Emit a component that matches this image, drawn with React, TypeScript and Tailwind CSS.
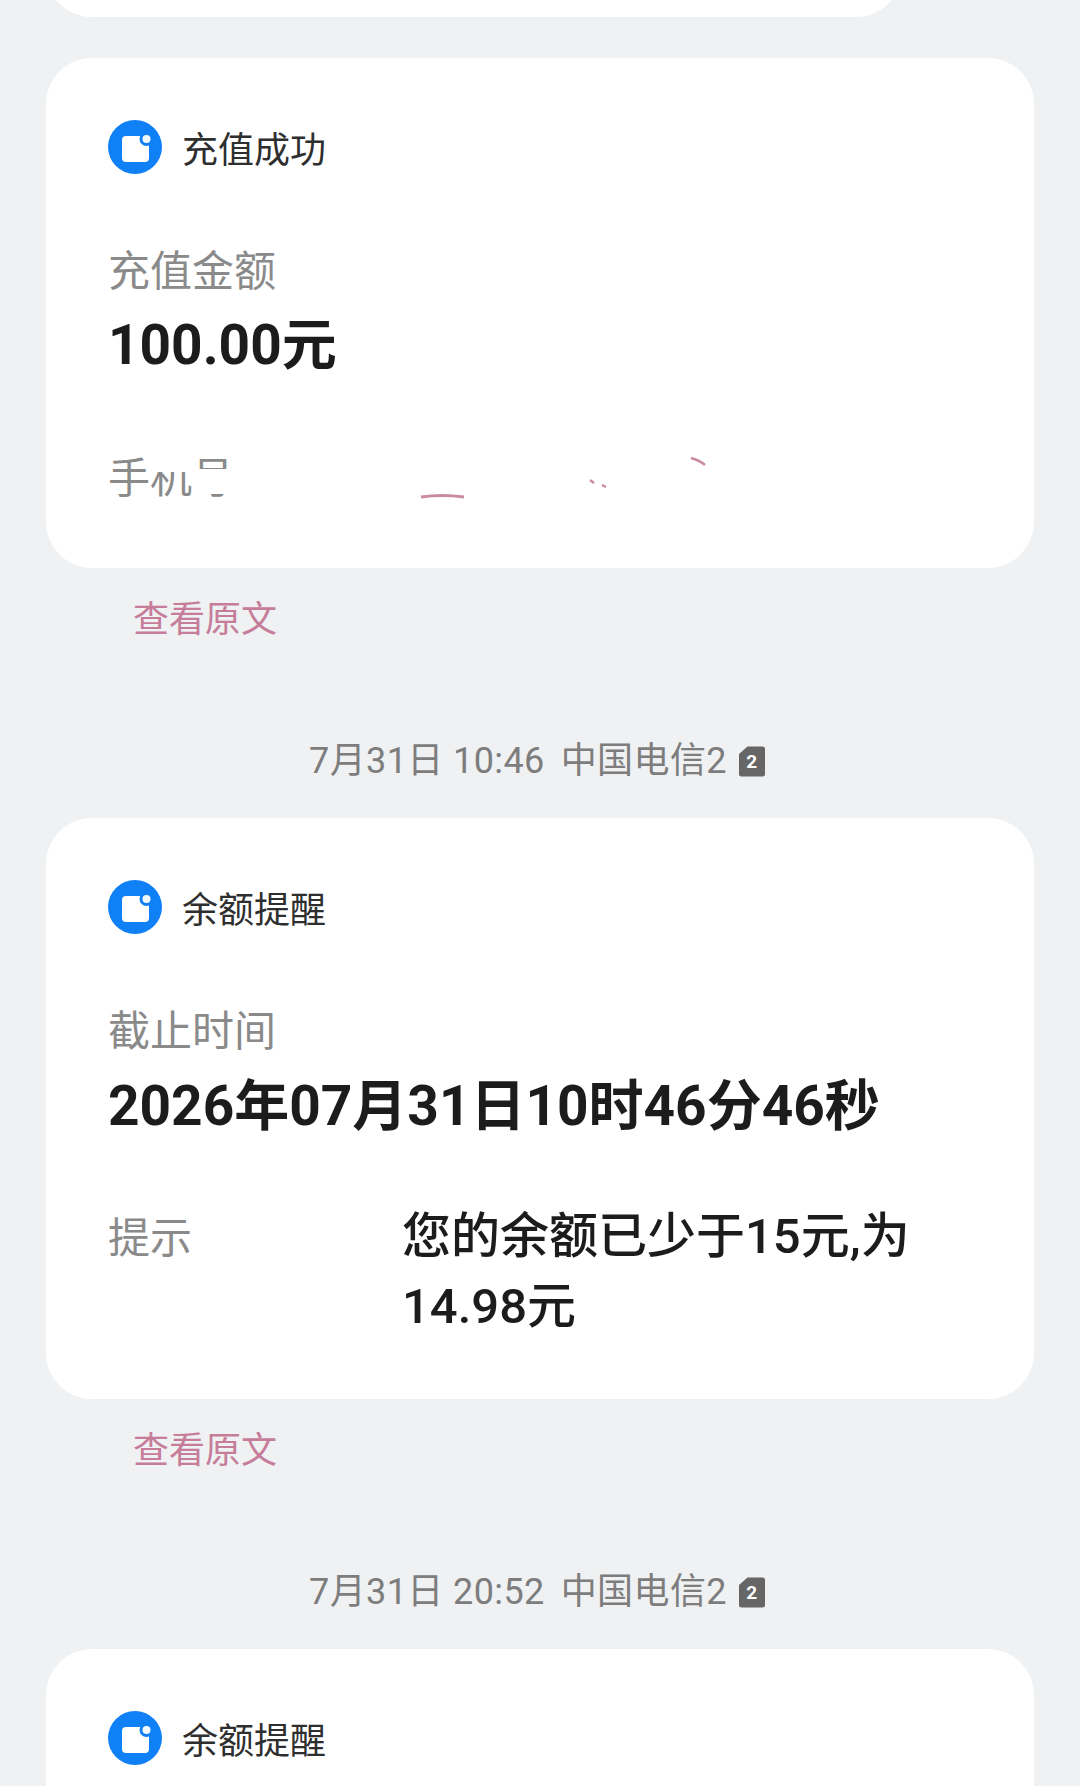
const fontStack = 'font-["Roboto","Noto_Sans_CJK_SC",sans-serif]';

function AppIcon() {
  return (
    <svg width="54" height="54" viewBox="0 0 54 54" className="shrink-0">
      <circle cx="27" cy="27" r="27" fill="#0f80f5" />
      <rect x="14" y="16" width="27" height="26" rx="4" fill="#fff" />
      <circle cx="38.5" cy="19" r="7" fill="#0f80f5" />
      <circle cx="38.5" cy="19" r="4" fill="#f4f9ff" />
    </svg>
  );
}

function SimBadge() {
  return (
    <span className="relative ml-[12px] inline-flex h-[31px] w-[26px] items-center justify-center">
      <svg width="26" height="31" viewBox="0 0 26 31" className="absolute inset-0">
        <path d="M8.5 0.5h15a2.5 2.5 0 0 1 2.5 2.5v25a2.5 2.5 0 0 1-2.5 2.5H2.5a2.5 2.5 0 0 1-2.5-2.5V8z" fill="#666" />
      </svg>
      <span className="relative text-[19px] leading-none font-bold text-white">2</span>
    </span>
  );
}

function CardHeader({ title }: { title: string }) {
  return (
    <div className="flex h-[54px] items-center gap-[20px]">
      <AppIcon />
      <span className="pt-[8px] text-[36px] leading-none text-[#2e2e2e]">{title}</span>
    </div>
  );
}

function TimeRow({ time }: { time: string }) {
  return (
    <div className="mt-[91px] flex h-[50px] items-center justify-center pr-[6px] text-[36px] tracking-[0.4px] text-[#7d7d7d]">
      <span>{time}</span>
      <span className="ml-[16px]">中国电信2</span>
      <SimBadge />
    </div>
  );
}

function SourceLink() {
  return <div className="mt-[27px] pl-[133px] text-[36px] leading-[50px] text-[#c67d9a]">查看原文</div>;
}

export default function App() {
  return (
    <div className={`${fontStack} h-[1786px] w-[1080px] overflow-hidden bg-[#eff1f3]`}>
      <div className="ml-[46px] -mt-[63px] h-[80px] w-[856px] rounded-b-[46px] bg-white" />

      <div className="mx-[46px] mt-[41px] rounded-[46px] bg-white pt-[62px] pr-[62px] pb-[54px] pl-[62px]">
        <CardHeader title="充值成功" />
        <div className="mt-[68px] text-[42px] leading-[60px] text-[#8a8a8a]">充值金额</div>
        <div className="text-[55px] leading-[86px] font-bold text-[#1c1c1c]">100.00元</div>
        <div className="relative mt-[56px] text-[42px] leading-[70px] text-[#8a8a8a]">
          手机号
          {/* number was wiped out in the picture, only bits are left */}
          <span className="absolute top-[10px] left-[42px] h-[18px] w-[46px] bg-white" />
          <span className="absolute top-[25px] left-[86px] h-[25px] w-[48px] bg-white" />
          <svg width="620" height="70" viewBox="0 0 620 70" className="absolute top-0 left-0" fill="none" stroke="#c98aa3">
            <path d="M313 53q21-3 43 0" strokeWidth="3" />
            <path d="M482 36l4 3M494 41l4 2" strokeWidth="2.5" />
            <path d="M583 14q8 2 14 7" strokeWidth="2.5" />
          </svg>
        </div>
      </div>
      <SourceLink />

      <TimeRow time="7月31日 10:46" />
      <div className="mx-[46px] mt-[32px] rounded-[46px] bg-white pt-[62px] pr-[62px] pb-[57px] pl-[62px]">
        <CardHeader title="余额提醒" />
        <div className="mt-[68px] text-[42px] leading-[60px] text-[#8a8a8a]">截止时间</div>
        <div className="text-[55px] leading-[88px] font-bold whitespace-nowrap text-[#1c1c1c]">2026年07月31日10时46分46秒</div>
        <div className="mt-[52px] flex">
          <div className="w-[294px] shrink-0 pt-[2px] text-[42px] leading-[70px] text-[#8a8a8a]">提示</div>
          <div className="w-[520px] text-[49px] leading-[70px] font-medium text-[#1c1c1c]">您的余额已少于15元,为14.98元</div>
        </div>
      </div>
      <SourceLink />

      <TimeRow time="7月31日 20:52" />
      <div className="mx-[46px] mt-[32px] rounded-t-[46px] bg-white pt-[62px] pr-[62px] pb-[55px] pl-[62px]">
        <CardHeader title="余额提醒" />
      </div>
    </div>
  );
}
